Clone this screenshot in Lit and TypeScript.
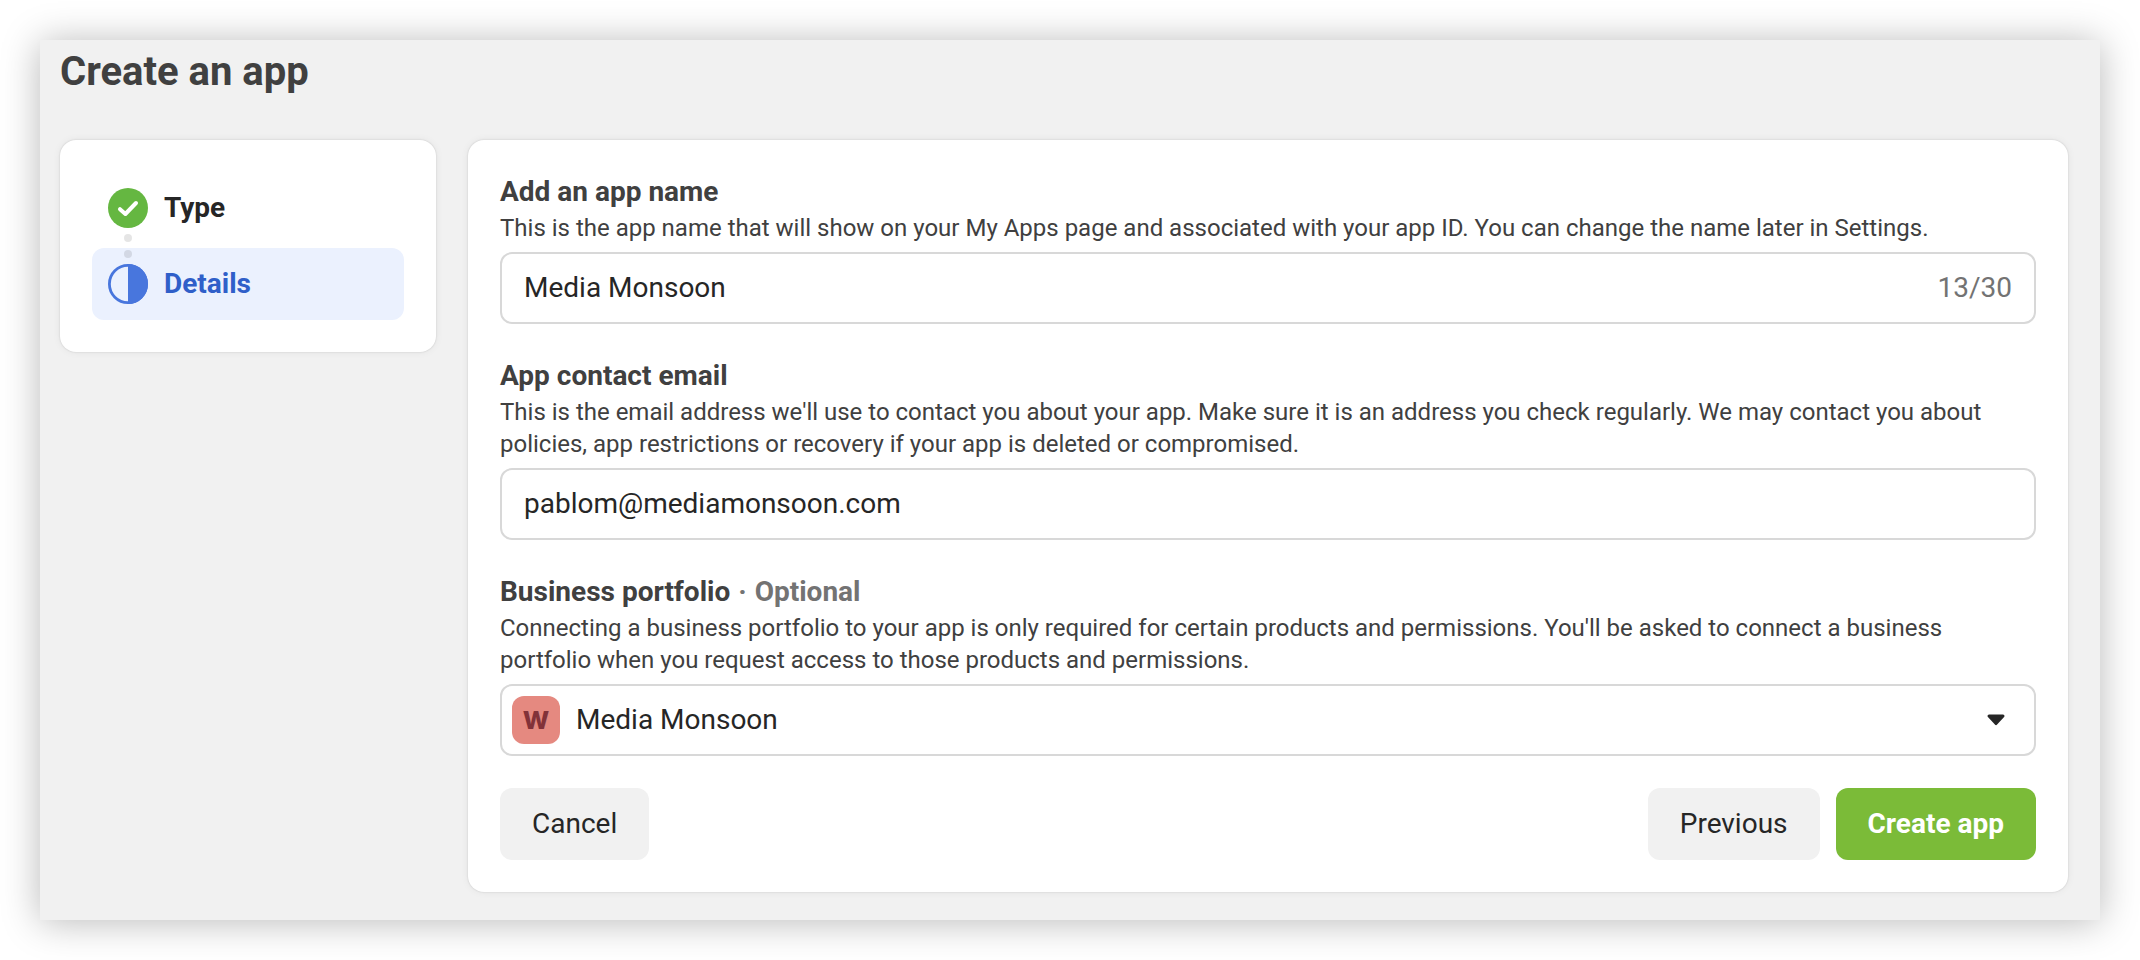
import { LitElement, html, css } from "lit";
import { customElement, state } from "lit/decorators.js";

@customElement("app-steps")
class AppSteps extends LitElement {
  static styles = css`
    :host {
      display: block;
    }
    .card {
      background: #fff;
      border-radius: 16px;
      box-shadow: 0 0 2px rgba(0, 0, 0, 0.16), 0 0 8px rgba(0, 0, 0, 0.06);
      padding: 32px;
    }
    .list {
      list-style: none;
      margin: 0;
      padding: 0;
      display: grid;
      gap: 4px;
    }
    .step {
      position: relative;
      display: flex;
      align-items: center;
      gap: 16px;
      min-height: 72px;
      padding: 0 16px;
      border-radius: 12px;
      font-size: 28px;
      line-height: 40px;
      font-weight: 700;
      color: #262626;
    }
    .current {
      background: #ebf1fe;
      color: #2f5fc9;
    }
    .icon {
      display: block;
      flex: none;
    }
    .link {
      position: absolute;
      left: 32px;
      top: -16px;
      display: block;
    }
  `;

  render() {
    return html`
      <nav class="card" aria-label="Steps">
        <ol class="list">
          <li class="step">
            <svg class="icon" width="40" height="40" viewBox="0 0 40 40" aria-hidden="true">
              <circle cx="20" cy="20" r="20" fill="#65b741" />
              <path d="M12 21.2 L17.4 26 L28 15" fill="none" stroke="#fff" stroke-width="4" stroke-linecap="round" stroke-linejoin="round" />
            </svg>
            <span>Type</span>
          </li>
          <li class="step current" aria-current="step">
            <svg class="link" width="8" height="26" viewBox="0 0 8 26" aria-hidden="true">
              <circle cx="4" cy="6" r="4" fill="#000" fill-opacity="0.1" />
              <circle cx="4" cy="22" r="4" fill="#000" fill-opacity="0.1" />
            </svg>
            <svg class="icon" width="40" height="40" viewBox="0 0 40 40" aria-hidden="true">
              <circle cx="20" cy="20" r="18.6" fill="none" stroke="#4876dd" stroke-width="2.8" />
              <path d="M20 0 A20 20 0 0 1 20 40 Z" fill="#4876dd" />
            </svg>
            <span>Details</span>
          </li>
        </ol>
      </nav>
    `;
  }
}

@customElement("app-root")
class AppRoot extends LitElement {
  @state() private name = "Media Monsoon";
  private readonly limit = 30;

  static styles = css`
    :host {
      display: block;
      padding: 40px;
      background: #fff;
      font-family: Roboto, "Liberation Sans", sans-serif;
      color: #262626;
    }
    .page {
      background: #f1f1f1;
      box-shadow: 0 2px 36px rgba(0, 0, 0, 0.28);
      padding: 8px 32px 28px 20px;
    }
    .title {
      margin: 0 0 44px;
      font-size: 40px;
      line-height: 48px;
      font-weight: 700;
      color: #404040;
    }
    .columns {
      display: grid;
      grid-template-columns: 376px minmax(0, 1fr);
      gap: 32px;
      align-items: start;
    }
    .form {
      display: grid;
      gap: 32px;
      padding: 32px;
      background: #fff;
      border-radius: 16px;
      box-shadow: 0 0 2px rgba(0, 0, 0, 0.16), 0 0 8px rgba(0, 0, 0, 0.06);
    }
    .label {
      display: block;
      font-size: 28px;
      line-height: 40px;
      font-weight: 700;
      color: #404040;
    }
    .optional {
      color: #737373;
    }
    .dot {
      margin: 0 1px;
    }
    .help {
      margin: 0 0 8px;
      font-size: 24px;
      line-height: 32px;
      color: #404040;
    }
    .box {
      display: flex;
      align-items: center;
      height: 72px;
      box-sizing: border-box;
      border: 2px solid #d8d8d8;
      border-radius: 12px;
      background: #fff;
    }
    .input {
      flex: 1;
      min-width: 0;
      padding: 0 22px;
      border: 0;
      background: none;
      outline: none;
      font: inherit;
      font-size: 28px;
      line-height: 40px;
      height: 40px;
      color: inherit;
    }
    .count {
      padding-right: 22px;
      font-size: 28px;
      line-height: 40px;
      color: #737373;
    }
    .picker {
      display: grid;
      grid-template-columns: 48px minmax(0, 1fr) 20px;
      column-gap: 16px;
      padding: 0 28px 0 10px;
    }
    .avatar {
      grid-area: 1 / 1;
      height: 48px;
      border-radius: 12px;
      background: #e58980;
      color: #823239;
      font-family: Inter, Roboto, sans-serif;
      font-size: 25px;
      line-height: 48px;
      font-weight: 800;
      text-align: center;
    }
    .select {
      grid-area: 1 / 1 / 2 / 4;
      height: 40px;
      padding: 0 0 0 64px;
      border: 0;
      background: none;
      outline: none;
      appearance: none;
      font: inherit;
      font-size: 28px;
      line-height: 40px;
      color: inherit;
    }
    .arrow {
      grid-area: 1 / 3;
      display: block;
      pointer-events: none;
    }
    .actions {
      display: flex;
      gap: 16px;
    }
    .button {
      padding: 16px 32px;
      border: 0;
      border-radius: 12px;
      background: #f1f1f1;
      font: inherit;
      font-size: 28px;
      line-height: 40px;
      color: #262626;
    }
    .cancel {
      margin-right: auto;
    }
    .primary {
      background: #7bbb38;
      color: #fff;
      font-weight: 700;
    }
  `;

  private onName(e: Event) {
    this.name = (e.target as HTMLInputElement).value;
  }

  render() {
    return html`
      <main class="page">
        <h1 class="title">Create an app</h1>
        <div class="columns">
          <app-steps></app-steps>
          <form class="form" @submit=${(e: Event) => e.preventDefault()}>
            <div>
              <label class="label" for="name">Add an app name</label>
              <p class="help" id="name-help">This is the app name that will show on your My Apps page and associated with your app ID. You can change the name later in Settings.</p>
              <div class="box">
                <input class="input" id="name" type="text" maxlength=${this.limit} aria-describedby="name-help" .value=${this.name} @input=${this.onName} />
                <span class="count">${this.name.length}/${this.limit}</span>
              </div>
            </div>
            <div>
              <label class="label" for="email">App contact email</label>
              <p class="help" id="email-help">This is the email address we'll use to contact you about your app. Make sure it is an address you check regularly. We may contact you about policies, app restrictions or recovery if your app is deleted or compromised.</p>
              <div class="box">
                <input class="input" id="email" type="email" aria-describedby="email-help" value="pablom@mediamonsoon.com" />
              </div>
            </div>
            <div>
              <label class="label" for="portfolio">Business portfolio <span class="optional"><span class="dot">·</span> Optional</span></label>
              <p class="help" id="portfolio-help">Connecting a business portfolio to your app is only required for certain products and permissions. You'll be asked to connect a business portfolio when you request access to those products and permissions.</p>
              <div class="box picker">
                <span class="avatar" aria-hidden="true">W</span>
                <select class="select" id="portfolio" aria-describedby="portfolio-help">
                  <option>Media Monsoon</option>
                </select>
                <svg class="arrow" width="20" height="12" viewBox="0 0 20 12" aria-hidden="true">
                  <path d="M3 2 H17 L10 9.6 Z" fill="#262626" stroke="#262626" stroke-width="3" stroke-linejoin="round" />
                </svg>
              </div>
            </div>
            <div class="actions">
              <button class="button cancel" type="button">Cancel</button>
              <button class="button" type="button">Previous</button>
              <button class="button primary" type="submit">Create app</button>
            </div>
          </form>
        </div>
      </main>
    `;
  }
}
